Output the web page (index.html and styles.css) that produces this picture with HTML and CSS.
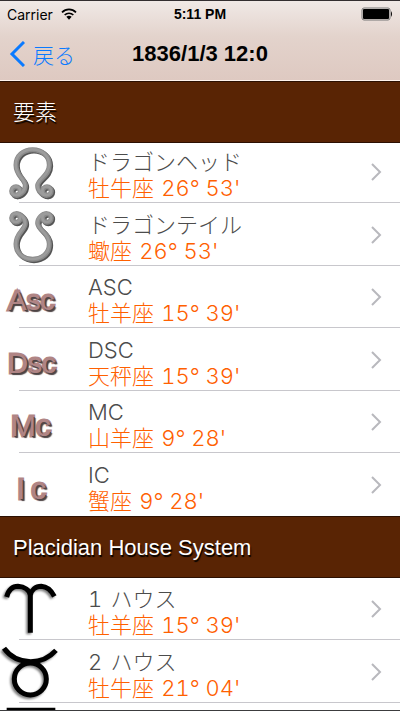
FILE: index.html
```html
<!DOCTYPE html>
<html lang="ja">
<head>
<meta charset="utf-8">
<meta name="viewport" content="width=device-width, initial-scale=1">
<title>1836/1/3 12:0</title>
<link rel="stylesheet" href="styles.css">
</head>
<body>
<svg class="defs" aria-hidden="true">
  <defs>
    <g id="node">
      <circle cx="48" cy="150" r="13"/>
      <circle cx="141" cy="150" r="13"/>
      <path d="M48 163C62 164 76 150 76 134C76 114 48 106 48 72C48 44 70 26 98 26C126 26 148 44 148 72C148 106 113 114 113 134C113 150 127 164 141 163"/>
    </g>
    <g id="aries"><path d="M20 57C26 34 40 25 54 25C74 26 88 36 91 52V164M91 52C94 36 106 25 124 25C142 26 154 38 163 55"/></g>
    <g id="taurus"><path d="M12 22C34 52 64 62 92 62C122 62 146 52 168 28"/><circle cx="91" cy="114" r="48"/></g>
    <g id="gemini"><path d="M20 22H166M66 24V160M122 24V160"/></g>
    <path id="chevron" d="M2 2L10 10L2 18"/>
  </defs>
</svg>
<div class="app">
  <header class="bar">
    <div class="status">
      <span class="carrier">Carrier
        <svg class="wifi" viewBox="0 0 48 36" aria-hidden="true"><path d="M3 13C15 1 33 1 45 13M11 21C18 14 30 14 37 21"/><path class="dot" d="M16 26Q24 20 32 26L24 35Z"/></svg>
      </span>
      <span class="clock">5:11 PM</span>
      <svg class="battery" viewBox="0 0 32 14" aria-hidden="true"><rect class="shell" x="1" y="1" width="28" height="12" rx="2"/><rect x="2" y="2" width="26" height="10" rx="1"/><path d="M30 4Q32 7 30 10Z"/></svg>
    </div>
    <nav class="nav">
      <button class="back" type="button"><svg viewBox="0 0 16 26" aria-hidden="true"><path d="M15 1L3 13L15 25"/></svg>戻る</button>
      <h1>1836/1/3 12:0</h1>
    </nav>
  </header>
  <main>
    <section>
      <h2>要素</h2>
      <ul>
        <li><a href="#head"><svg class="icon metal" viewBox="0 0 192 186"><use class="shade" href="#node" x="4" y="4"/><use class="face" href="#node"/><use class="shine" href="#node" x="-1" y="-1"/></svg><span class="text"><span class="name">ドラゴンヘッド</span><span class="value">牡牛座 <b>26° 53'</b></span></span><svg class="more" viewBox="0 0 12 20"><use href="#chevron"/></svg></a></li>
        <li><a href="#tail"><svg class="icon metal" viewBox="0 0 192 186"><use class="shade" href="#node" transform="translate(4 196) scale(1 -1)"/><use class="face" href="#node" transform="translate(0 192) scale(1 -1)"/><use class="shine" href="#node" transform="translate(-1 191) scale(1 -1)"/></svg><span class="text"><span class="name">ドラゴンテイル</span><span class="value">蠍座 <b>26° 53'</b></span></span><svg class="more" viewBox="0 0 12 20"><use href="#chevron"/></svg></a></li>
        <li><a href="#asc"><span class="icon clay">Asc</span><span class="text"><span class="name">ASC</span><span class="value">牡羊座 <b>15° 39'</b></span></span><svg class="more" viewBox="0 0 12 20"><use href="#chevron"/></svg></a></li>
        <li><a href="#dsc"><span class="icon clay">Dsc</span><span class="text"><span class="name">DSC</span><span class="value">天秤座 <b>15° 39'</b></span></span><svg class="more" viewBox="0 0 12 20"><use href="#chevron"/></svg></a></li>
        <li><a href="#mc"><span class="icon clay tall">Mc</span><span class="text"><span class="name">MC</span><span class="value">山羊座 <b>9° 28'</b></span></span><svg class="more" viewBox="0 0 12 20"><use href="#chevron"/></svg></a></li>
        <li><a href="#ic"><span class="icon clay tall spaced"><span>I</span><span>c</span></span><span class="text"><span class="name">IC</span><span class="value">蟹座 <b>9° 28'</b></span></span><svg class="more" viewBox="0 0 12 20"><use href="#chevron"/></svg></a></li>
      </ul>
    </section>
    <section>
      <h2>Placidian House System</h2>
      <ul>
        <li><a href="#house1"><svg class="icon ink" viewBox="0 0 192 186"><use class="blur" href="#aries" x="-5" y="5"/><use href="#aries"/></svg><span class="text"><span class="name"><b>1</b> ハウス</span><span class="value">牡羊座 <b>15° 39'</b></span></span><svg class="more" viewBox="0 0 12 20"><use href="#chevron"/></svg></a></li>
        <li><a href="#house2"><svg class="icon ink" viewBox="0 0 192 186"><use class="blur" href="#taurus" x="-5" y="5"/><use href="#taurus"/></svg><span class="text"><span class="name"><b>2</b> ハウス</span><span class="value">牡牛座 <b>21° 04'</b></span></span><svg class="more" viewBox="0 0 12 20"><use href="#chevron"/></svg></a></li>
        <li><a href="#house3"><svg class="icon ink" viewBox="0 0 192 186"><use href="#gemini"/></svg></a></li>
      </ul>
    </section>
  </main>
</div>
</body>
</html>
```
FILE: styles.css
```css
* { box-sizing: border-box; }

body {
  margin: 0;
  background: #fff;
  font-family: "Liberation Sans", "Noto Sans CJK JP", sans-serif;
}

.defs { display: block; width: 0; height: 0; }

.app {
  height: 100vh;
  overflow: hidden;
  border-top: 1px solid #332e30;
  border-bottom: 1px solid #3c3c3e;
}

.bar {
  height: 80px;
  background: linear-gradient(#f0e9e6, #e3d3cc 45%, #dec9c1);
  border-bottom: 1px solid #fff3ec;
}

.status {
  display: grid;
  grid-template-columns: 1fr auto 1fr;
  align-items: center;
  height: 26px;
  padding: 0 7px;
  font-size: 14px;
}

.carrier { display: flex; align-items: center; gap: 8px; font-family: Inter, sans-serif; }
.wifi { width: 16px; height: 12px; fill: none; stroke: #000; stroke-width: 5; }
.wifi .dot { fill: #000; stroke: none; }
.clock { font-weight: bold; }
.battery { width: 32px; height: 14px; justify-self: end; }
.battery .shell { fill: none; stroke: #777; }

.nav {
  display: grid;
  grid-template-columns: 1fr auto 1fr;
  align-items: center;
  height: 54px;
  padding: 0 9px;
}

.back {
  display: flex;
  align-items: center;
  gap: 8px;
  justify-self: start;
  padding: 0;
  border: 0;
  background: none;
  color: #0a7aff;
  font: 300 21px/28px "Noto Sans CJK JP", sans-serif;
}
.back svg { width: 16px; height: 26px; fill: none; stroke: currentColor; stroke-width: 3; }

h1 { margin: 0; font-size: 22px; line-height: 28px; }

h2 {
  position: relative;
  margin: 0;
  height: 62px;
  padding: 0 13px;
  background: #592404;
  border-top: 1px solid #2c1002;
  border-bottom: 1px solid #2c1002;
  color: #fff;
  font-size: 22px;
  font-weight: 300;
  line-height: 62px;
  text-shadow: 1px 2px 1px #000;
}

ul { margin: 0; padding: 0; list-style: none; }
section:first-child ul { margin-top: -2px; }

li { height: 62px; }
li:nth-child(even) { height: 63px; }

a {
  position: relative;
  display: flex;
  align-items: center;
  height: 100%;
  padding-right: 18px;
  color: inherit;
  text-decoration: none;
}
li:not(:last-child) a::after {
  content: "";
  position: absolute;
  left: 19px;
  right: 0;
  bottom: 0;
  border-bottom: 1px solid #c8c7cc;
}

.icon { flex: none; width: 64px; height: 62px; }
.text { display: flex; flex: 1; flex-direction: column; padding: 6px 0 0 24px; }
.name, .value {
  font-family: Inter, "Noto Sans CJK JP", sans-serif;
  font-size: 22px;
  font-weight: 300;
  line-height: 26px;
  white-space: nowrap;
}
.name { color: #4c4c4c; }
.value { color: #ff6000; }
b { font-weight: 300; font-variant-numeric: tabular-nums; }
.name b { margin-right: 2px; }
.value b { margin-left: 1px; }

.more { width: 12px; height: 20px; fill: none; stroke: #b8b8bd; stroke-width: 2; }

.metal { fill: none; stroke-width: 15; }
.shade { stroke: #555; }
.face { stroke: #8a8a8a; }
.shine { stroke: #9c9c9c; stroke-width: 8; }

.ink { fill: none; stroke: #000; stroke-width: 15; }
.blur { opacity: 0.5; filter: blur(3px); }

.clay {
  padding: 8px 0 0 8px;
  color: #b08585;
  -webkit-text-stroke: 3px #b08585;
  paint-order: stroke;
  stroke-linejoin: round;
  font-size: 28px;
  line-height: 54px;
  text-shadow: 1px 1px 0 #4d4444, 2px 2px 1px #4d4444;
}
.clay.tall { padding-left: 11px; font-size: 30px; }
.clay.spaced { display: flex; gap: 6px; padding-left: 17px; }
```
